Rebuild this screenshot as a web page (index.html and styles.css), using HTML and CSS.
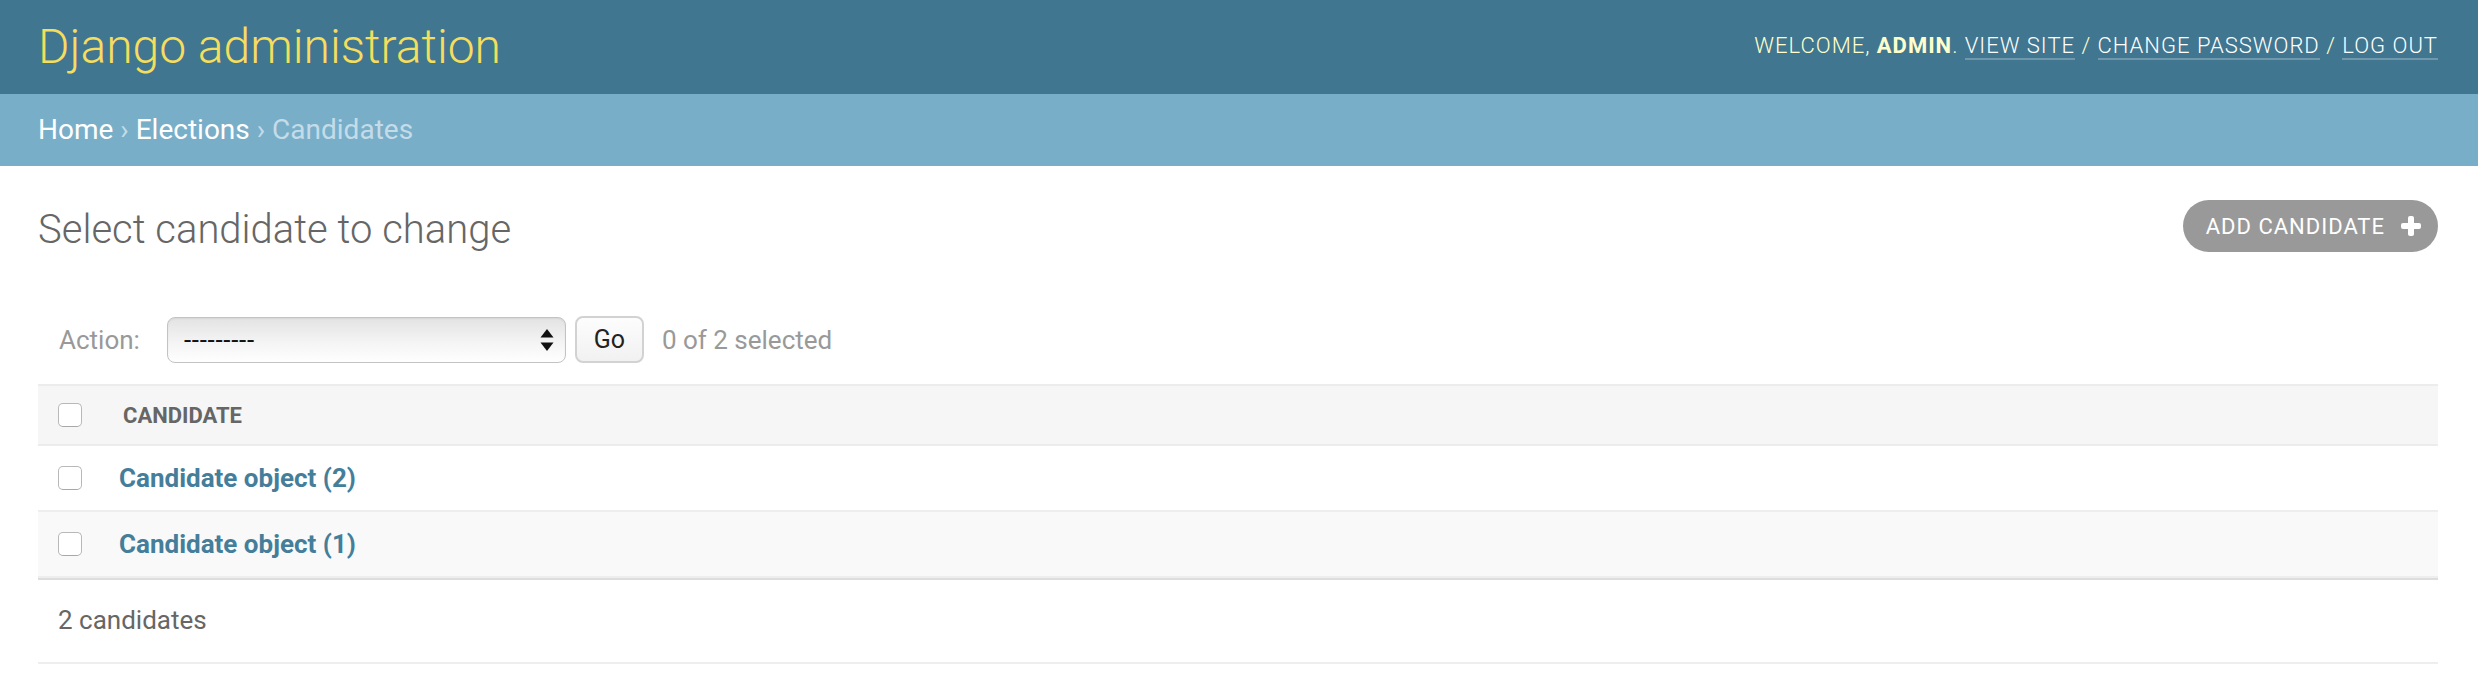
FILE: index.html
```html
<!DOCTYPE html>
<html lang="en">
<head>
<meta charset="utf-8">
<title>Select candidate to change | Django site admin</title>
<link rel="stylesheet" href="styles.css">
</head>
<body>
<header class="header">
  <div class="branding"><h1 class="site-name">Django administration</h1></div>
  <div class="user-tools">
    Welcome, <strong>admin</strong>. <a href="#">View site</a> / <a href="#">Change password</a> / <a href="#">Log out</a>
  </div>
</header>
<nav class="breadcrumbs">
  <a href="#">Home</a> <span class="sep">›</span> <a href="#">Elections</a> <span class="sep">›</span> Candidates
</nav>
<main class="content">
  <div class="title-row">
    <h1 class="page-title">Select candidate to change</h1>
    <a class="addlink" href="#">Add candidate
      <svg class="plus" width="20" height="20" viewBox="0 0 20 20" aria-hidden="true">
        <rect x="7" y="0" width="6" height="20" rx="2" fill="#fff"/>
        <rect x="0" y="7" width="20" height="6" rx="2" fill="#fff"/>
      </svg>
    </a>
  </div>
  <div class="changelist">
    <div class="actions">
      <label class="action-label">Action:</label>
      <div class="select-wrap">
        <select class="action-select"><option>---------</option></select>
        <svg class="select-arrows" width="14" height="22" viewBox="0 0 14 22" aria-hidden="true">
          <path d="M7 0 L13.5 8.5 L0.5 8.5 Z" fill="#111"/>
          <path d="M7 22 L13.5 13.5 L0.5 13.5 Z" fill="#111"/>
        </svg>
      </div>
      <button class="go-btn" type="button">Go</button>
      <span class="action-counter">0 of 2 selected</span>
    </div>
    <table class="results">
      <thead>
        <tr>
          <th class="cb-col"><span class="cb"></span></th>
          <th class="name-col"><span class="th-text">Candidate</span></th>
        </tr>
      </thead>
      <tbody>
        <tr class="row1">
          <td class="cb-col"><span class="cb"></span></td>
          <td class="name-col"><a href="#">Candidate object (2)</a></td>
        </tr>
        <tr class="row2">
          <td class="cb-col"><span class="cb"></span></td>
          <td class="name-col"><a href="#">Candidate object (1)</a></td>
        </tr>
      </tbody>
    </table>
    <p class="paginator">2 candidates</p>
  </div>
</main>
</body>
</html>
```
FILE: styles.css
```css
html, body {
  margin: 0;
  padding: 0;
  background: #fff;
}
body {
  font-family: Roboto, "Liberation Sans", sans-serif;
  color: #333;
  font-size: 28px;
}
a { text-decoration: none; }

/* Header */
.header {
  display: flex;
  justify-content: space-between;
  align-items: center;
  padding: 20px 40px 20px 38px;
  background: #417690;
  color: #ffc;
}
.site-name {
  margin: 0;
  font-size: 48px;
  line-height: 54px;
  font-weight: 300;
  color: #f5dd5d;
}
.user-tools {
  font-size: 22px;
  line-height: 30px;
  font-weight: 300;
  letter-spacing: 1px;
  text-transform: uppercase;
  color: #ffc;
  margin-bottom: 3px;
  white-space: nowrap;
}
.user-tools strong {
  font-weight: 700;
}
.user-tools a {
  color: #fff;
  border-bottom: 2px solid rgba(255, 255, 255, 0.25);
}

/* Breadcrumbs */
.breadcrumbs {
  background: #79aec8;
  padding: 20px 40px 20px 38px;
  font-size: 28px;
  line-height: 32px;
  color: #c4dce8;
}
.breadcrumbs a { color: #fff; }

/* Content */
.content {
  padding: 40px 40px 40px 38px;
}
.title-row {
  display: flex;
  justify-content: space-between;
  align-items: flex-start;
  margin-bottom: 40px;
}
.page-title {
  margin: 0;
  font-size: 40px;
  line-height: 47px;
  font-weight: 300;
  color: #666;
}
.addlink {
  display: flex;
  align-items: center;
  gap: 16px;
  margin-top: -6px;
  height: 52px;
  box-sizing: border-box;
  padding: 0 17px 0 23px;
  background: #999;
  color: #fff;
  border-radius: 26px;
  font-size: 22px;
  font-weight: 400;
  letter-spacing: 1px;
  text-transform: uppercase;
}
.plus { display: block; }

/* Actions bar */
.actions {
  display: flex;
  align-items: center;
  padding: 23px 20px 21px 21px;
  color: #999;
  font-size: 26px;
  height: 47px;
}
.action-label {
  margin-right: 27px;
}
.select-wrap {
  position: relative;
  width: 399px;
  height: 46px;
}
.action-select {
  -webkit-appearance: none;
  appearance: none;
  width: 100%;
  height: 100%;
  box-sizing: border-box;
  border: 1.5px solid #c3c3c3;
  border-radius: 8px;
  background: linear-gradient(#e3e3e3, #f4f4f4 55%, #fefefe);
  box-shadow: inset 0 1px 2px rgba(0, 0, 0, 0.06);
  padding: 0 0 0 16px;
  font-family: Roboto, "Liberation Sans", sans-serif;
  font-size: 26px;
  font-weight: 400;
  letter-spacing: 0.7px;
  color: #111;
  outline: none;
}
.select-arrows {
  position: absolute;
  right: 12px;
  top: 12px;
}
.go-btn {
  margin-left: 9px;
  width: 69px;
  height: 47px;
  box-sizing: border-box;
  border: 2px solid #d2d2d2;
  border-radius: 8px;
  background: linear-gradient(#fdfdfd, #f1f1f1);
  font-family: Roboto, "Liberation Sans", sans-serif;
  font-size: 25px;
  color: #222;
  padding: 0;
}
.action-counter {
  margin-left: 18px;
  color: #999;
}

/* Results table */
.results {
  width: 100%;
  border-collapse: separate;
  border-spacing: 0;
}
.results th,
.results td {
  padding: 0;
  vertical-align: middle;
  text-align: left;
}
.results thead th {
  height: 58px;
  background: #f6f6f6;
  border-top: 2px solid #ececec;
  border-bottom: 2px solid #ececec;
  font-size: 22px;
  font-weight: 700;
  color: #666;
  text-transform: uppercase;
}
.results td {
  height: 64px;
  border-bottom: 2px solid #eee;
  font-size: 26px;
}
.results .row1 td { background: #fff; }
.results .row2 td { background: #f9f9f9; }
.cb-col {
  width: 24px;
  padding: 0 16px 0 20px !important;
}
.cb {
  display: block;
  width: 24px;
  height: 24px;
  box-sizing: border-box;
  border: 1.5px solid #b8b8b8;
  border-bottom-color: #a8a8a8;
  border-radius: 5px;
  background: #fff;
}
.name-col a {
  padding-left: 21px;
  color: #447e9b;
  font-weight: 700;
}
.th-text {
  padding-left: 25px;
}

/* Paginator */
.paginator {
  margin: 0;
  border-top: 2px solid #ddd;
  border-bottom: 2px solid #eee;
  padding: 18px 20px 20px 20px;
  line-height: 44px;
  font-size: 26px;
  color: #666;
}
```
